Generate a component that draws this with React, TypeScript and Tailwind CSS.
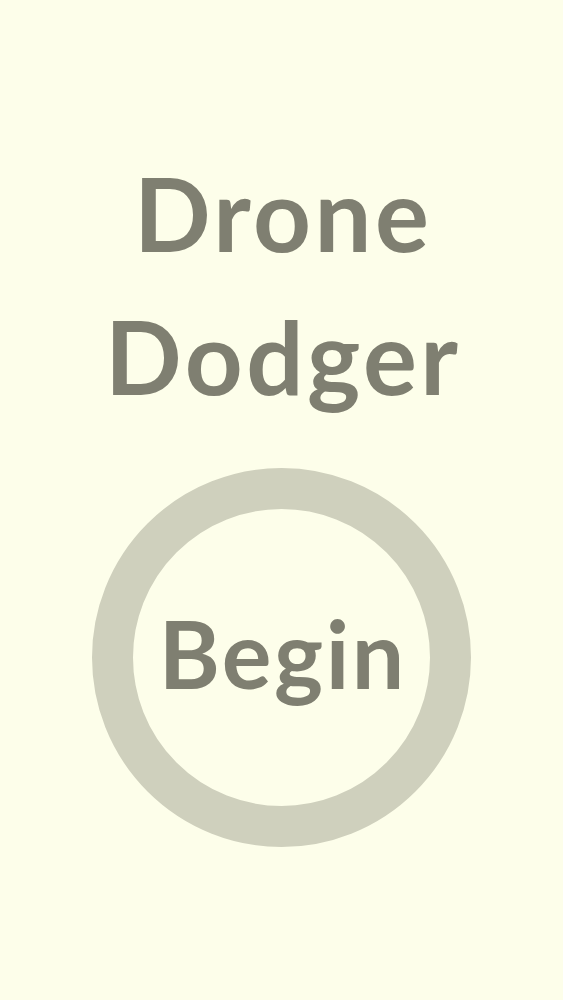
import React from "react";

export default function App() {
  return (
    <div className="min-h-screen w-full bg-[#fdfeea] flex flex-col items-center pt-[142px]" style={{ fontFamily: "Lato, 'Open Sans', sans-serif" }}>
      <h1 className="text-[101px] leading-[143px] font-bold text-[#7f7f71] text-center tracking-[3.5px] pl-[3.5px]">
        Drone
        <br />
        Dodger
      </h1>
      <button className="mt-[40px] w-[379px] h-[379px] rounded-full border-[41px] border-[#cfd0bd] flex items-center justify-center pb-2">
        <span className="text-[93px] font-bold text-[#7f7f71] tracking-[2.5px] pl-[2.5px]">Begin</span>
      </button>
    </div>
  );
}
